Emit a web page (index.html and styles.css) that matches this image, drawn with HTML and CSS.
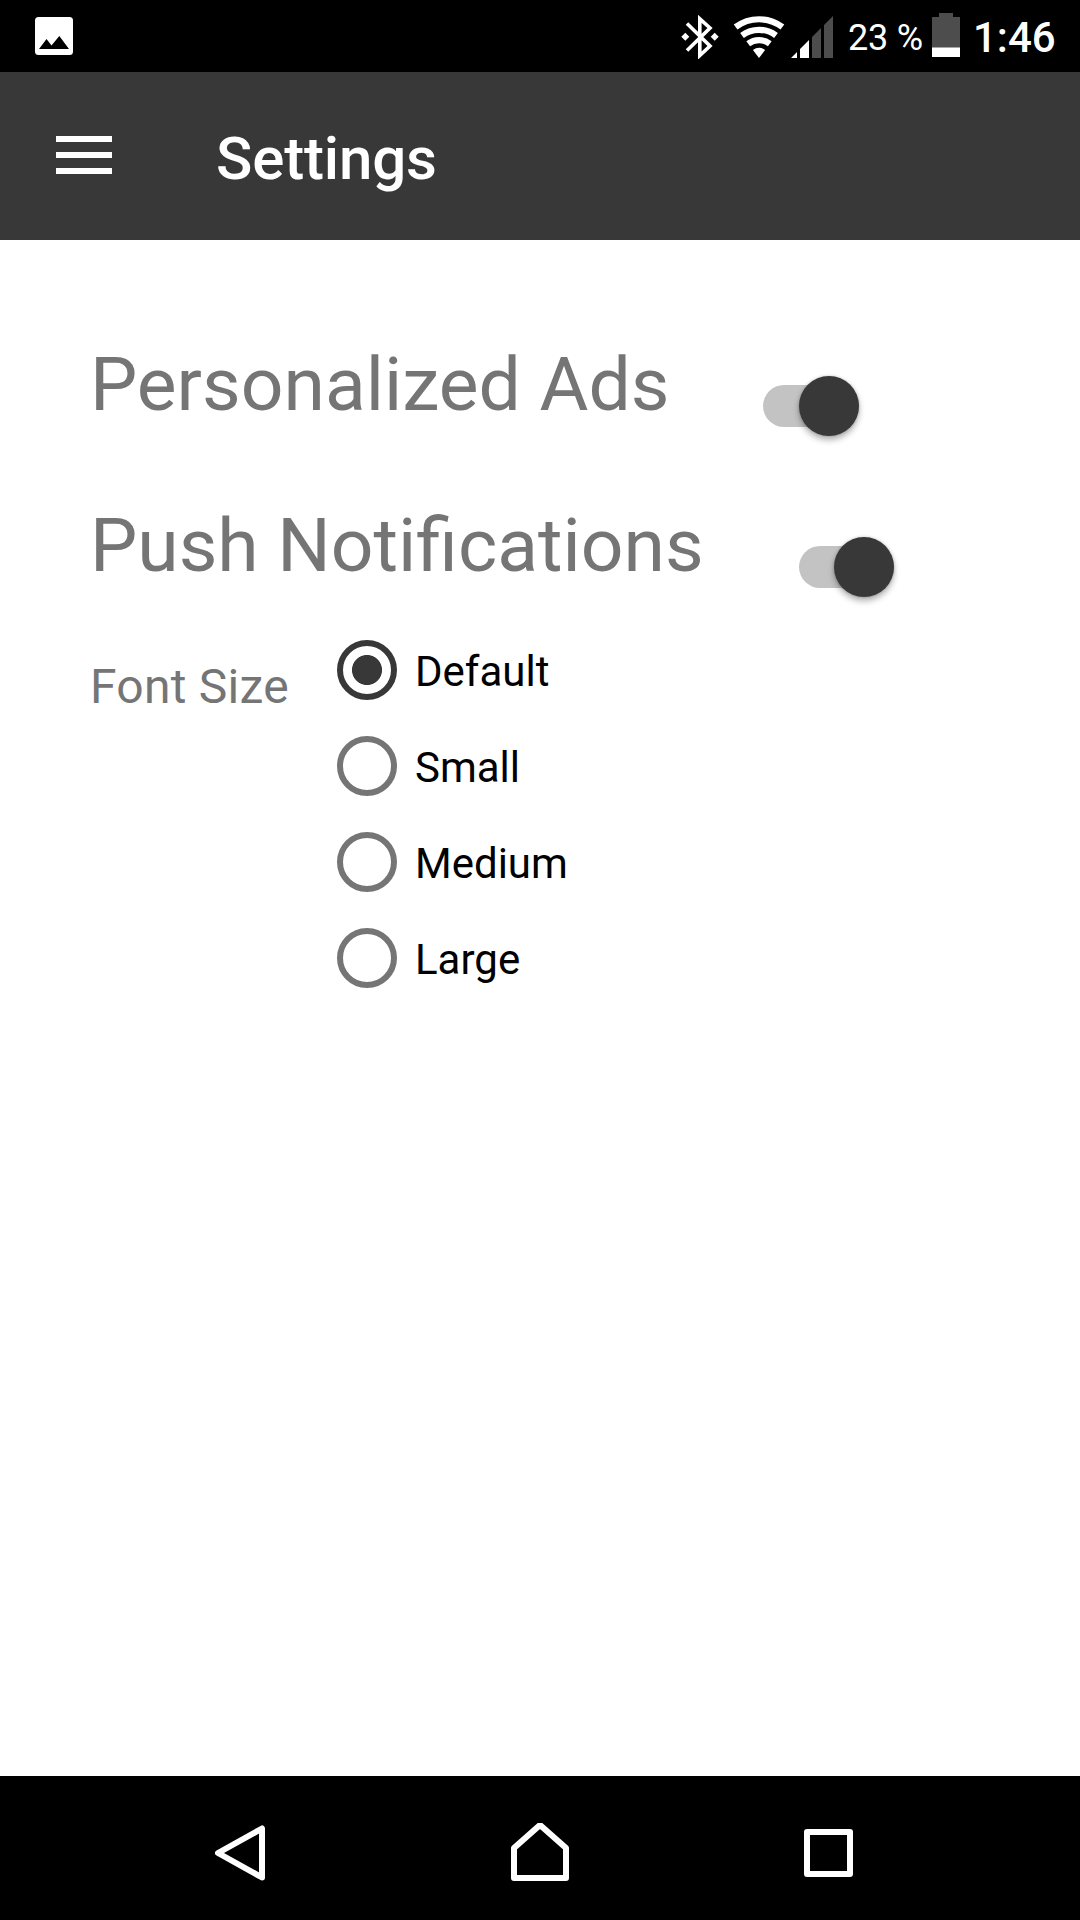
FILE: index.html
```html
<!DOCTYPE html>
<html lang="en">
<head>
  <meta charset="UTF-8" />
  <meta name="viewport" content="width=device-width, initial-scale=1.0"/>
  <title>Settings</title>
  <link rel="stylesheet" href="styles.css">
</head>
<body>

  <div class="status-bar">
    <svg class="icon-image" width="38" height="38" viewBox="0 0 38 38">
      <rect width="38" height="38" rx="3.5" fill="#fff"/>
      <path d="M4 32L11.5 22L16.5 28.5L24.3 19L34 32Z" fill="#000"/>
    </svg>
    <div class="status-right">
      <svg class="icon-bluetooth" width="38" height="44" viewBox="0 0 38 44">
        <path d="M6 8.5L29 31L18.8 40.5V3.8L29 13L6 35.5" fill="none" stroke="#fff" stroke-width="3.6"/>
        <path d="M4.3 17.7L8.3 21.7L4.3 25.7L.3 21.7ZM33.7 17.7L37.7 21.7L33.7 25.7L29.7 21.7Z" fill="#fff"/>
      </svg>
      <svg class="icon-wifi" width="52" height="42" viewBox="0 0 52 42">
        <g fill="none" stroke="#fff" stroke-width="6.2">
          <path d="M2.6 11.1A38.9 38.9 0 0 1 49.4 11.1"/>
          <path d="M9 19.5A28.3 28.3 0 0 1 43 19.5"/>
          <path d="M15.2 27.7A17.9 17.9 0 0 1 36.8 27.7"/>
        </g>
        <path d="M26 42L19.9 34Q26 29.7 32.1 34Z" fill="#fff"/>
      </svg>
      <svg class="icon-signal" width="42" height="42" viewBox="0 0 42 42">
        <path d="M0 42L6 36V42ZM9 33L18 24V42H9Z" fill="#fff"/>
        <path d="M21 21L30 12V42H21ZM33 9L42 0V42H33Z" fill="#4d4d4d"/>
      </svg>
      <span class="battery-text">23 %</span>
      <svg class="icon-battery" width="28" height="44" viewBox="0 0 28 44">
        <path d="M7 0H21V4H28V44H0V4H7Z" fill="#4d4d4d"/>
        <rect y="34.5" width="28" height="9.5" fill="#fff"/>
      </svg>
      <span class="clock">1:46</span>
    </div>
  </div>

  <header class="navbar">
    <div class="menu-icon">
      <span></span>
      <span></span>
      <span></span>
    </div>
    <h1>Settings</h1>
  </header>

  <main class="container">
    <div class="setting-row">
      <span class="setting-label">Personalized Ads</span>
      <div class="switch"><div class="thumb"></div></div>
    </div>
    <div class="setting-row push">
      <span class="setting-label">Push Notifications</span>
      <div class="switch"><div class="thumb"></div></div>
    </div>
    <div class="font-row">
      <span class="font-label">Font Size</span>
      <div class="radio-group">
        <div class="radio-item"><span class="radio checked"></span><span class="radio-text">Default</span></div>
        <div class="radio-item"><span class="radio"></span><span class="radio-text">Small</span></div>
        <div class="radio-item"><span class="radio"></span><span class="radio-text">Medium</span></div>
        <div class="radio-item"><span class="radio"></span><span class="radio-text">Large</span></div>
      </div>
    </div>
  </main>

  <footer class="nav-buttons">
    <svg width="60" height="60" viewBox="0 0 60 60">
      <path d="M8 30L52 5.5V54.5Z"/>
    </svg>
    <svg width="60" height="60" viewBox="0 0 60 60">
      <path d="M4 25L30 2L56 25V55H4Z"/>
    </svg>
    <svg width="60" height="60" viewBox="0 0 60 60">
      <path d="M9 9H52V51H9Z"/>
    </svg>
  </footer>

</body>
</html>
```

FILE: styles.css
```css
* {
  box-sizing: border-box;
}
body {
  margin: 0;
  height: 1920px;
  display: flex;
  flex-direction: column;
  font-family: Roboto, sans-serif;
  background: #fff;
  overflow: hidden;
}

/* status bar */
.status-bar {
  height: 72px;
  background: #000;
  color: #fff;
  display: flex;
  justify-content: space-between;
  padding: 0 25px 0 35px;
}
.icon-image { margin-top: 17px; }
.status-right {
  display: flex;
  align-items: flex-start;
}
.icon-bluetooth { margin: 15px 14px 0 0; }
.icon-wifi { margin: 16px 6px 0 0; }
.icon-signal { margin: 16px 15px 0 0; }
.battery-text {
  width: 84px;
  margin-top: 17px;
  font-size: 36px;
  line-height: 42px;
  letter-spacing: -0.2px;
  white-space: nowrap;
}
.icon-battery { margin: 13px 13px 0 0; }
.clock {
  width: 82px;
  margin-top: 13px;
  font-size: 42px;
  font-weight: 500;
  line-height: 49px;
}

/* app bar */
.navbar {
  height: 168px;
  background: #383838;
  color: #fff;
  display: flex;
  align-items: flex-start;
  padding-left: 56px;
}
.menu-icon {
  width: 56px;
  margin: 64px 104px 0 0;
  display: flex;
  flex-direction: column;
  gap: 10px;
}
.menu-icon span {
  height: 6px;
  background: #fff;
}
.navbar h1 {
  margin: 52px 0 0;
  font-size: 60px;
  font-weight: 500;
  line-height: 70px;
  letter-spacing: -0.15px;
}

/* settings */
.container {
  flex: 1;
  padding: 100px 0 0 90px;
}
.setting-row {
  display: flex;
  align-items: flex-start;
  gap: 94px;
  height: 161px;
}
.setting-label {
  font-size: 75px;
  line-height: 88px;
  color: #757575;
}
.push .setting-label {
  padding-right: 1px;
}
.switch {
  width: 95.5px;
  height: 42px;
  margin-top: 45px;
  display: flex;
  align-items: center;
  justify-content: flex-end;
  border-radius: 21px;
  background: #c3c3c3;
}
.thumb {
  width: 60px;
  height: 60px;
  flex: none;
  margin-bottom: 1px;
  border-radius: 50%;
  background: #383838;
  box-shadow: 0 4px 6px rgba(0, 0, 0, 0.3), 0 0 3px rgba(0, 0, 0, 0.2);
}
.font-row {
  display: flex;
  align-items: flex-start;
  margin-top: -40px;
}
.font-label {
  width: 247px;
  margin-top: 37px;
  font-size: 48px;
  line-height: 56px;
  letter-spacing: 0.25px;
  color: #757575;
}
.radio-item {
  height: 96px;
  display: flex;
  align-items: center;
  gap: 18px;
}
.radio-text {
  padding-top: 2px;
  font-size: 42px;
  line-height: 49px;
  color: #000;
}
.radio {
  width: 60px;
  height: 60px;
  border: 6px solid #757575;
  border-radius: 50%;
}
.radio.checked {
  border-color: #383838;
  background: radial-gradient(circle, #383838 14.6px, #fff 15.4px);
}

/* bottom buttons */
.nav-buttons {
  height: 144px;
  background: #000;
  display: flex;
  padding: 47px 0 0 210px;
}
.nav-buttons svg:nth-child(2) {
  margin: 0 228px 0 240px;
}
.nav-buttons path {
  fill: none;
  stroke: #fff;
  stroke-width: 6;
  stroke-linejoin: round;
}
```
